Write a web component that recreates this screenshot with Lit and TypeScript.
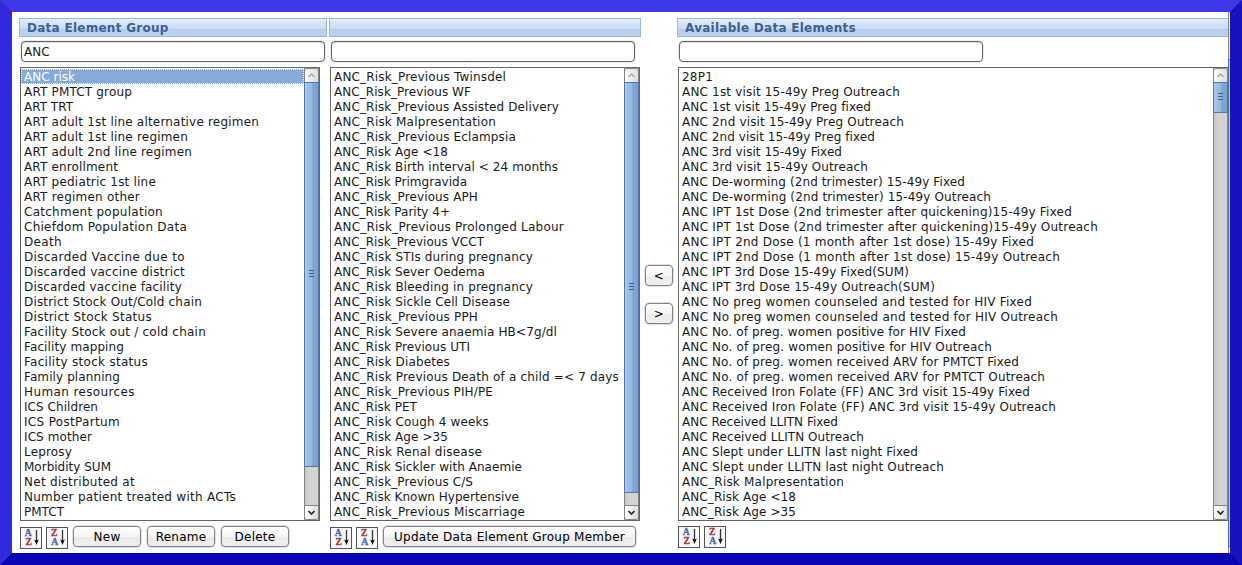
import { LitElement, html, css, svg } from "lit";
import { customElement, property } from "lit/decorators.js";

/** A list entry: its label and the width in pixels that the label is set to. */
type Item = [label: string, width: number];

const GROUPS: Item[] = [
  ["ANC risk", 51], ["ART PMTCT group", 108], ["ART TRT", 49],
  ["ART adult 1st line alternative regimen", 235], ["ART adult 1st line regimen", 164],
  ["ART adult 2nd line regimen", 168], ["ART enrollment", 94],
  ["ART pediatric 1st line", 132], ["ART regimen other", 116],
  ["Catchment population", 139], ["Chiefdom Population Data", 163], ["Death", 38],
  ["Discarded Vaccine due to", 161], ["Discarded vaccine district", 161],
  ["Discarded vaccine facility", 158], ["District Stock Out/Cold chain", 178],
  ["District Stock Status", 128], ["Facility Stock out / cold chain", 182],
  ["Facility mapping", 100], ["Facility stock status", 124], ["Family planning", 96],
  ["Human resources", 111], ["ICS Children", 74], ["ICS PostPartum", 96],
  ["ICS mother", 68], ["Leprosy", 48], ["Morbidity SUM", 87],
  ["Net distributed at", 111], ["Number patient treated with ACTs", 212], ["PMTCT", 40],
];

const MEMBERS: Item[] = [
  ["ANC_Risk_Previous Twinsdel", 172], ["ANC_Risk_Previous WF", 137],
  ["ANC_Risk_Previous Assisted Delivery", 225], ["ANC_Risk Malpresentation", 162],
  ["ANC_Risk_Previous Eclampsia", 182], ["ANC_Risk Age <18", 114],
  ["ANC_Risk Birth interval < 24 months", 224], ["ANC_Risk Primgravida", 133],
  ["ANC_Risk_Previous APH", 144], ["ANC_Risk Parity 4+", 116],
  ["ANC_Risk_Previous Prolonged Labour", 230], ["ANC_Risk_Previous VCCT", 150],
  ["ANC_Risk STIs during pregnancy", 199], ["ANC_Risk Sever Oedema", 151],
  ["ANC_Risk Bleeding in pregnancy", 199], ["ANC_Risk Sickle Cell Disease", 176],
  ["ANC_Risk_Previous PPH", 144], ["ANC_Risk Severe anaemia HB<7g/dl", 223],
  ["ANC_Risk Previous UTI", 136], ["ANC_Risk Diabetes", 116],
  ["ANC_Risk Previous Death of a child =< 7 days", 285], ["ANC_Risk_Previous PIH/PE", 159],
  ["ANC_Risk PET", 83], ["ANC_Risk Cough 4 weeks", 155], ["ANC_Risk Age >35", 114],
  ["ANC_Risk Renal disease", 148], ["ANC_Risk Sickler with Anaemie", 188],
  ["ANC_Risk_Previous C/S", 139], ["ANC_Risk Known Hypertensive", 185],
  ["ANC_Risk_Previous Miscarriage", 191],
];

const AVAILABLE: Item[] = [
  ["28P1", 31], ["ANC 1st visit 15-49y Preg Outreach", 218],
  ["ANC 1st visit 15-49y Preg fixed", 189], ["ANC 2nd visit 15-49y Preg Outreach", 222],
  ["ANC 2nd visit 15-49y Preg fixed", 193], ["ANC 3rd visit 15-49y Fixed", 160],
  ["ANC 3rd visit 15-49y Outreach", 186],
  ["ANC De-worming (2nd trimester) 15-49y Fixed", 283],
  ["ANC De-worming (2nd trimester) 15-49y Outreach", 309],
  ["ANC IPT 1st Dose (2nd trimester after quickening)15-49y Fixed", 390],
  ["ANC IPT 1st Dose (2nd trimester after quickening)15-49y Outreach", 416],
  ["ANC IPT 2nd Dose (1 month after 1st dose) 15-49y Fixed", 352],
  ["ANC IPT 2nd Dose (1 month after 1st dose) 15-49y Outreach", 378],
  ["ANC IPT 3rd Dose 15-49y Fixed(SUM)", 227], ["ANC IPT 3rd Dose 15-49y Outreach(SUM)", 253],
  ["ANC No preg women counseled and tested for HIV Fixed", 350],
  ["ANC No preg women counseled and tested for HIV Outreach", 376],
  ["ANC No. of preg. women positive for HIV Fixed", 284],
  ["ANC No. of preg. women positive for HIV Outreach", 310],
  ["ANC No. of preg. women received ARV for PMTCT Fixed", 337],
  ["ANC No. of preg. women received ARV for PMTCT Outreach", 363],
  ["ANC Received Iron Folate (FF) ANC 3rd visit 15-49y Fixed", 348],
  ["ANC Received Iron Folate (FF) ANC 3rd visit 15-49y Outreach", 374],
  ["ANC Received LLITN Fixed", 156], ["ANC Received LLITN Outreach", 182],
  ["ANC Slept under LLITN last night Fixed", 236],
  ["ANC Slept under LLITN last night Outreach", 262],
  ["ANC_Risk Malpresentation", 162], ["ANC_Risk Age <18", 114], ["ANC_Risk Age >35", 114],
];

const pen = document.createElement("canvas").getContext("2d")!;

/** Letter spacing that brings a label of the lists to its set width. */
function tracking([label, width]: Item): string {
  pen.font = '12px "DejaVu Sans", sans-serif';
  return ((width - pen.measureText(label).width) / label.length).toFixed(3);
}

@customElement("list-scrollbar")
class ListScrollbar extends LitElement {
  @property({ type: Number }) thumb = 100;

  static styles = css`
    :host { display: flex; flex-direction: column; flex: none; width: 15px; box-sizing: border-box;
      background: linear-gradient(90deg, #c8c6c4, #d6d4d2 30%, #d4d2d0); border-left: 1px solid #858483; border-right: 1px solid #858483; }
    .btn { height: 14px; flex: none; box-sizing: border-box; display: block; background: linear-gradient(100deg, #fff, #dddbd9); }
    .up { border-top: 1px solid #858483; border-radius: 3px 3px 0 0; }
    .down { border: solid #858483; border-width: 1px 0; border-radius: 0 0 3px 3px; margin-top: auto; height: 15px; }
    .thumb { flex: none; box-sizing: border-box; margin: 0 -1px; border: 1px solid #4f79ae;
      background: linear-gradient(90deg, #b4d0f0 0, #a3c2e8 12%, #96b7e2 50%, #80a5d8 60%, #7a9fd2);
      display: flex; flex-direction: column; align-items: center; justify-content: center; gap: 2px; padding-bottom: 2px; }
    .thumb i { width: 5px; height: 1px; background: #3b5f92; }
    svg { display: block; width: 13px; height: 13px; }
  `;

  render() {
    return html`
      <div class="btn up"><svg viewBox="0 0 13 13"><path d="M3.5 8 L6.5 5 L9.5 8" fill="none" stroke="#aaa9a8" stroke-width="1.5"/></svg></div>
      <div class="thumb" style="height:${this.thumb}px"><i></i><i></i><i></i></div>
      <div class="btn down"><svg viewBox="0 0 13 13"><path d="M3.5 5 L6.5 8 L9.5 5" fill="none" stroke="#222" stroke-width="1.6"/></svg></div>
    `;
  }
}

@customElement("item-list")
class ItemList extends LitElement {
  @property({ attribute: false }) items: Item[] = [];
  @property({ type: Number }) selected = -1;
  @property({ type: Number }) thumb = 100;

  static styles = css`
    :host { display: flex; box-sizing: border-box; height: 454px; border: 1px solid #666; background: #fff; }
    .rows { flex: 1; min-width: 0; padding-top: 1px; }
    .row { height: 15px; line-height: 16px; padding-left: 3px; white-space: pre; color: #1a1a1a; box-sizing: border-box; }
    .row.on { background: #86abd9; color: #fff; outline: 1px dotted #f4f8fd; outline-offset: -1px; }
  `;

  render() {
    return html`
      <div class="rows">${this.items.map((item, i) => html`<div class="row ${i === this.selected ? "on" : ""}" style="letter-spacing:${tracking(item)}px">${item[0]}</div>`)}</div>
      <list-scrollbar .thumb=${this.thumb}></list-scrollbar>
    `;
  }
}

@customElement("sort-buttons")
class SortButtons extends LitElement {
  static styles = css`
    :host { display: flex; gap: 4px; flex: none; }
    .box { width: 22px; height: 22px; box-sizing: border-box; border: 1px solid #555; background: #f8f8f8; }
    svg { display: block; width: 20px; height: 20px; }
    text { font: bold 9.6px "Liberation Serif", serif; stroke-width: 0.35; }
    .a { fill: #4a6cb4; stroke: #4a6cb4; }
    .z { fill: #a8393c; stroke: #a8393c; }
  `;

  icon(top: string, bottom: string) {
    return html`<div class="box"><svg viewBox="0 0 20 20">
      ${svg`<text class=${top.toLowerCase()} x="7.2" y="8.4" text-anchor="middle">${top}</text>
      <text class=${bottom.toLowerCase()} x="7.7" y="16.8" text-anchor="middle">${bottom}</text>`}
      <path d="M15.5 2 V14" stroke="#333" stroke-width="1.3"/><path d="M13.2 11.5 L15.5 12.5 L17.8 11.5 L15.5 17 Z" fill="#111"/>
    </svg></div>`;
  }

  render() {
    return html`${this.icon("A", "Z")}${this.icon("Z", "A")}`;
  }
}

@customElement("app-root")
class AppRoot extends LitElement {
  static styles = css`
    :host { display: block; font: 12px "DejaVu Sans", sans-serif; color: #000; }
    .frame { box-sizing: border-box; width: 1242px; height: 565px; border: 12px solid; border-color: #3f37e8 #1910c0 #0a04b5 #3229dc;
      display: flex; background: #fff; overflow: hidden; }
    .page { flex: 1; min-width: 0; display: flex; padding: 6px 0 0 7px; overflow: hidden; }
    .col { flex: none; display: flex; flex-direction: column; }
    .groups { width: 308px; margin-right: 2px; }
    .members { width: 312px; }
    .available { width: 560px; }
    .head { box-sizing: border-box; height: 19px; border: 1px solid #93b8e8; padding-left: 7px; white-space: pre;
      font-weight: bold; line-height: 18px; letter-spacing: 0.27px; color: #3c5f96;
      background: linear-gradient(#e8f1fb 0, #d9e7f6 2px, #cbdcf2 10px, #aac6e8 10px, #b8cfed 11px, #bcd2ef 100%); }
    .field { box-sizing: border-box; height: 21px; width: 304px; margin: 4px 0 0 2px; border: 1px solid #666; border-radius: 4px; padding: 0 2px;
      line-height: 20px; background: #fff; box-shadow: inset 0 1px #ddd, 0 0 0 1px #ececec; color: #1a1a1a; }
    item-list { margin: 5px 0 0 1px; }
    .groups item-list { width: 300px; }
    .members item-list { width: 310px; }
    .available item-list { width: 551px; }
    .bar { display: flex; margin: 5px 0 0 1px; }
    sort-buttons { margin: 1px 5px 0 0; }
    .available sort-buttons { margin-top: 0; }
    .btn { box-sizing: border-box; height: 21px; border: 1px solid #858381; border-radius: 4px; display: flex; align-items: center; justify-content: center;
      line-height: 14px; padding-top: 1px;
      background: linear-gradient(#fff, #f6f5f4 50%, #ecebea 52%, #f0efee); white-space: pre; letter-spacing: 0.25px; box-shadow: 0 0 0 0.5px #c0bfbe; }
    .std { width: 68px; margin-right: 6px; }
    .wide { width: 253px; }
    .move { flex: none; width: 28px; padding: 247px 4px 0; display: flex; flex-direction: column; gap: 17px; }
    .outer { flex: none; width: 2px; display: flex; flex-direction: column; background: #eee; box-sizing: border-box; border-left: 1px solid #858483; }
    .outer i { margin: 47px 0 0 -1px; height: 488px; box-sizing: border-box; border: solid #4a72a8; border-width: 1px 0 1px 1px; background: #b4d0f0; }
  `;

  render() {
    return html`
      <div class="frame">
        <div class="page">
          <div class="col groups">
            <div class="head">Data Element Group</div>
            <div class="field">ANC</div>
            <item-list .items=${GROUPS} .selected=${0} .thumb=${385}></item-list>
            <div class="bar"><sort-buttons></sort-buttons>
              <div class="btn std">New</div><div class="btn std">Rename</div><div class="btn std">Delete</div></div>
          </div>
          <div class="col members">
            <div class="head"></div>
            <div class="field"></div>
            <item-list .items=${MEMBERS} .thumb=${411}></item-list>
            <div class="bar"><sort-buttons></sort-buttons><div class="btn wide">Update Data Element Group Member</div></div>
          </div>
          <div class="move"><div class="btn">&lt;</div><div class="btn">&gt;</div></div>
          <div class="col available">
            <div class="head">Available Data Elements</div>
            <div class="field"></div>
            <item-list .items=${AVAILABLE} .thumb=${31}></item-list>
            <div class="bar"><sort-buttons></sort-buttons></div>
          </div>
        </div>
        <div class="outer"><i></i></div>
      </div>
    `;
  }
}
